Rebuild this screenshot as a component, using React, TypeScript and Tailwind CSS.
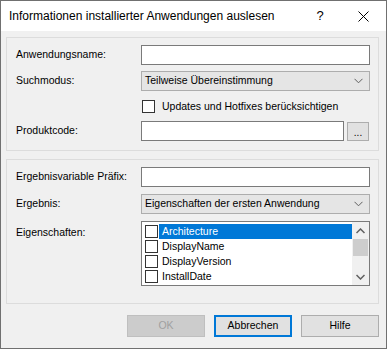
import React from "react";

const font = { fontFamily: '"Liberation Sans", Arial, sans-serif' };

function Chevron() {
  return (
    <svg width="9" height="6" viewBox="0 0 9 6" className="block">
      <path d="M0.5 0.8 L4.5 4.8 L8.5 0.8" fill="none" stroke="#606060" strokeWidth="1" />
    </svg>
  );
}

function Box() {
  return <div className="w-[13px] h-[13px] border border-[#333333] bg-white shrink-0" />;
}

function Row({ label, children, mt }: { label: string; children: React.ReactNode; mt: string }) {
  return (
    <div className={`flex items-center ${mt}`}>
      <div className="w-[134px] pl-[9px] text-[10.5px] text-black whitespace-nowrap">{label}</div>
      {children}
    </div>
  );
}

function Input({ w = "w-[229px]" }: { w?: string }) {
  return <div className={`${w} h-[20px] border border-[#7a7a7a] bg-white`} />;
}

function Combo({ text }: { text: string }) {
  return (
    <div className="w-[229px] h-[20px] border border-[#adadad] bg-[#e5e5e5] flex items-center justify-between pl-[3px] pr-[6px] text-[10.5px]">
      <span>{text}</span>
      <Chevron />
    </div>
  );
}

export default function App() {
  const items = ["Architecture", "DisplayName", "DisplayVersion", "InstallDate"];
  return (
    <div style={font} className="w-[387px] h-[349px] border border-[#707070] bg-[#f0f0f0] flex flex-col text-black">
      <div className="h-[30px] bg-white flex items-center pl-[8px] text-[12px] shrink-0">
        <span className="flex-1">Informationen installierter Anwendungen auslesen</span>
        <span className="w-[46px] text-center text-[13px] pl-[6px]">?</span>
        <span className="w-[46px] flex justify-center">
          <svg width="11" height="11" viewBox="0 0 11 11">
            <path d="M0.5 0.5 L10.5 10.5 M10.5 0.5 L0.5 10.5" stroke="#000" strokeWidth="1" />
          </svg>
        </span>
      </div>

      <div className="flex flex-col pl-[5px] pr-[7px] pt-[6px]">
        {/* Group 1 */}
        <div className="border border-[#dcdcdc] h-[114px] flex flex-col pt-[7px]">
          <Row label="Anwendungsname:" mt="">
            <Input />
          </Row>
          <Row label="Suchmodus:" mt="mt-[6px]">
            <Combo text="Teilweise Übereinstimmung" />
          </Row>
          <div className="flex items-center mt-[9px] pl-[135px] h-[13px]">
            <Box />
            <span className="ml-[7px] text-[10.5px]">Updates und Hotfixes berücksichtigen</span>
          </div>
          <Row label="Produktcode:" mt="mt-[8px]">
            <Input w="w-[203px]" />
            <div className="ml-[3px] w-[22px] h-[19px] border border-[#adadad] bg-[#e1e1e1] flex items-end justify-center text-[10px] leading-[14px]">...</div>
          </Row>
        </div>

        {/* Group 2 */}
        <div className="border border-[#dcdcdc] h-[145px] mt-[8px] flex flex-col pt-[7px]">
          <Row label="Ergebnisvariable Präfix:" mt="">
            <Input />
          </Row>
          <Row label="Ergebnis:" mt="mt-[7px]">
            <Combo text="Eigenschaften der ersten Anwendung" />
          </Row>
          <div className="flex items-start mt-[7px]">
            <div className="w-[134px] pl-[9px] text-[10.5px] pt-[4px]">Eigenschaften:</div>
            <div className="w-[229px] h-[65px] border border-[#7a7a7a] bg-white flex">
              <div className="flex-1 flex flex-col pt-[2px] pl-[3px]">
                {items.map((it, i) => (
                  <div key={it} className="h-[15px] flex items-center">
                    <Box />
                    <div
                      className={`ml-[1px] flex-1 h-[15px] flex items-center pl-[3px] text-[10.5px] ${
                        i === 0 ? "bg-[#0078d7] text-white" : "text-black"
                      }`}
                    >
                      {it}
                    </div>
                  </div>
                ))}
              </div>
              <div className="w-[17px] bg-[#f0f0f0] flex flex-col items-center">
                <div className="h-[17px] flex items-center justify-center">
                  <svg width="9" height="6" viewBox="0 0 9 6">
                    <path d="M0.5 5 L4.5 1 L8.5 5" fill="none" stroke="#606060" strokeWidth="1.5" />
                  </svg>
                </div>
                <div className="w-[15px] h-[17px] bg-[#cdcdcd]" />
                <div className="flex-1" />
                <div className="h-[17px] flex items-center justify-center">
                  <svg width="9" height="6" viewBox="0 0 9 6">
                    <path d="M0.5 1 L4.5 5 L8.5 1" fill="none" stroke="#606060" strokeWidth="1.5" />
                  </svg>
                </div>
              </div>
            </div>
          </div>
        </div>

        {/* Buttons */}
        <div className="flex justify-end gap-[9px] mt-[11px]">
          <div className="w-[78px] h-[22px] border border-[#bfbfbf] bg-[#cccccc] flex items-center justify-center text-[10.5px] text-[#a0a0a0]">OK</div>
          <div className="w-[78px] h-[22px] border-2 border-[#0078d7] bg-[#e1e1e1] flex items-center justify-center text-[10.5px]">Abbrechen</div>
          <div className="w-[78px] h-[22px] border border-[#adadad] bg-[#e1e1e1] flex items-center justify-center text-[10.5px]">Hilfe</div>
        </div>
      </div>
    </div>
  );
}
